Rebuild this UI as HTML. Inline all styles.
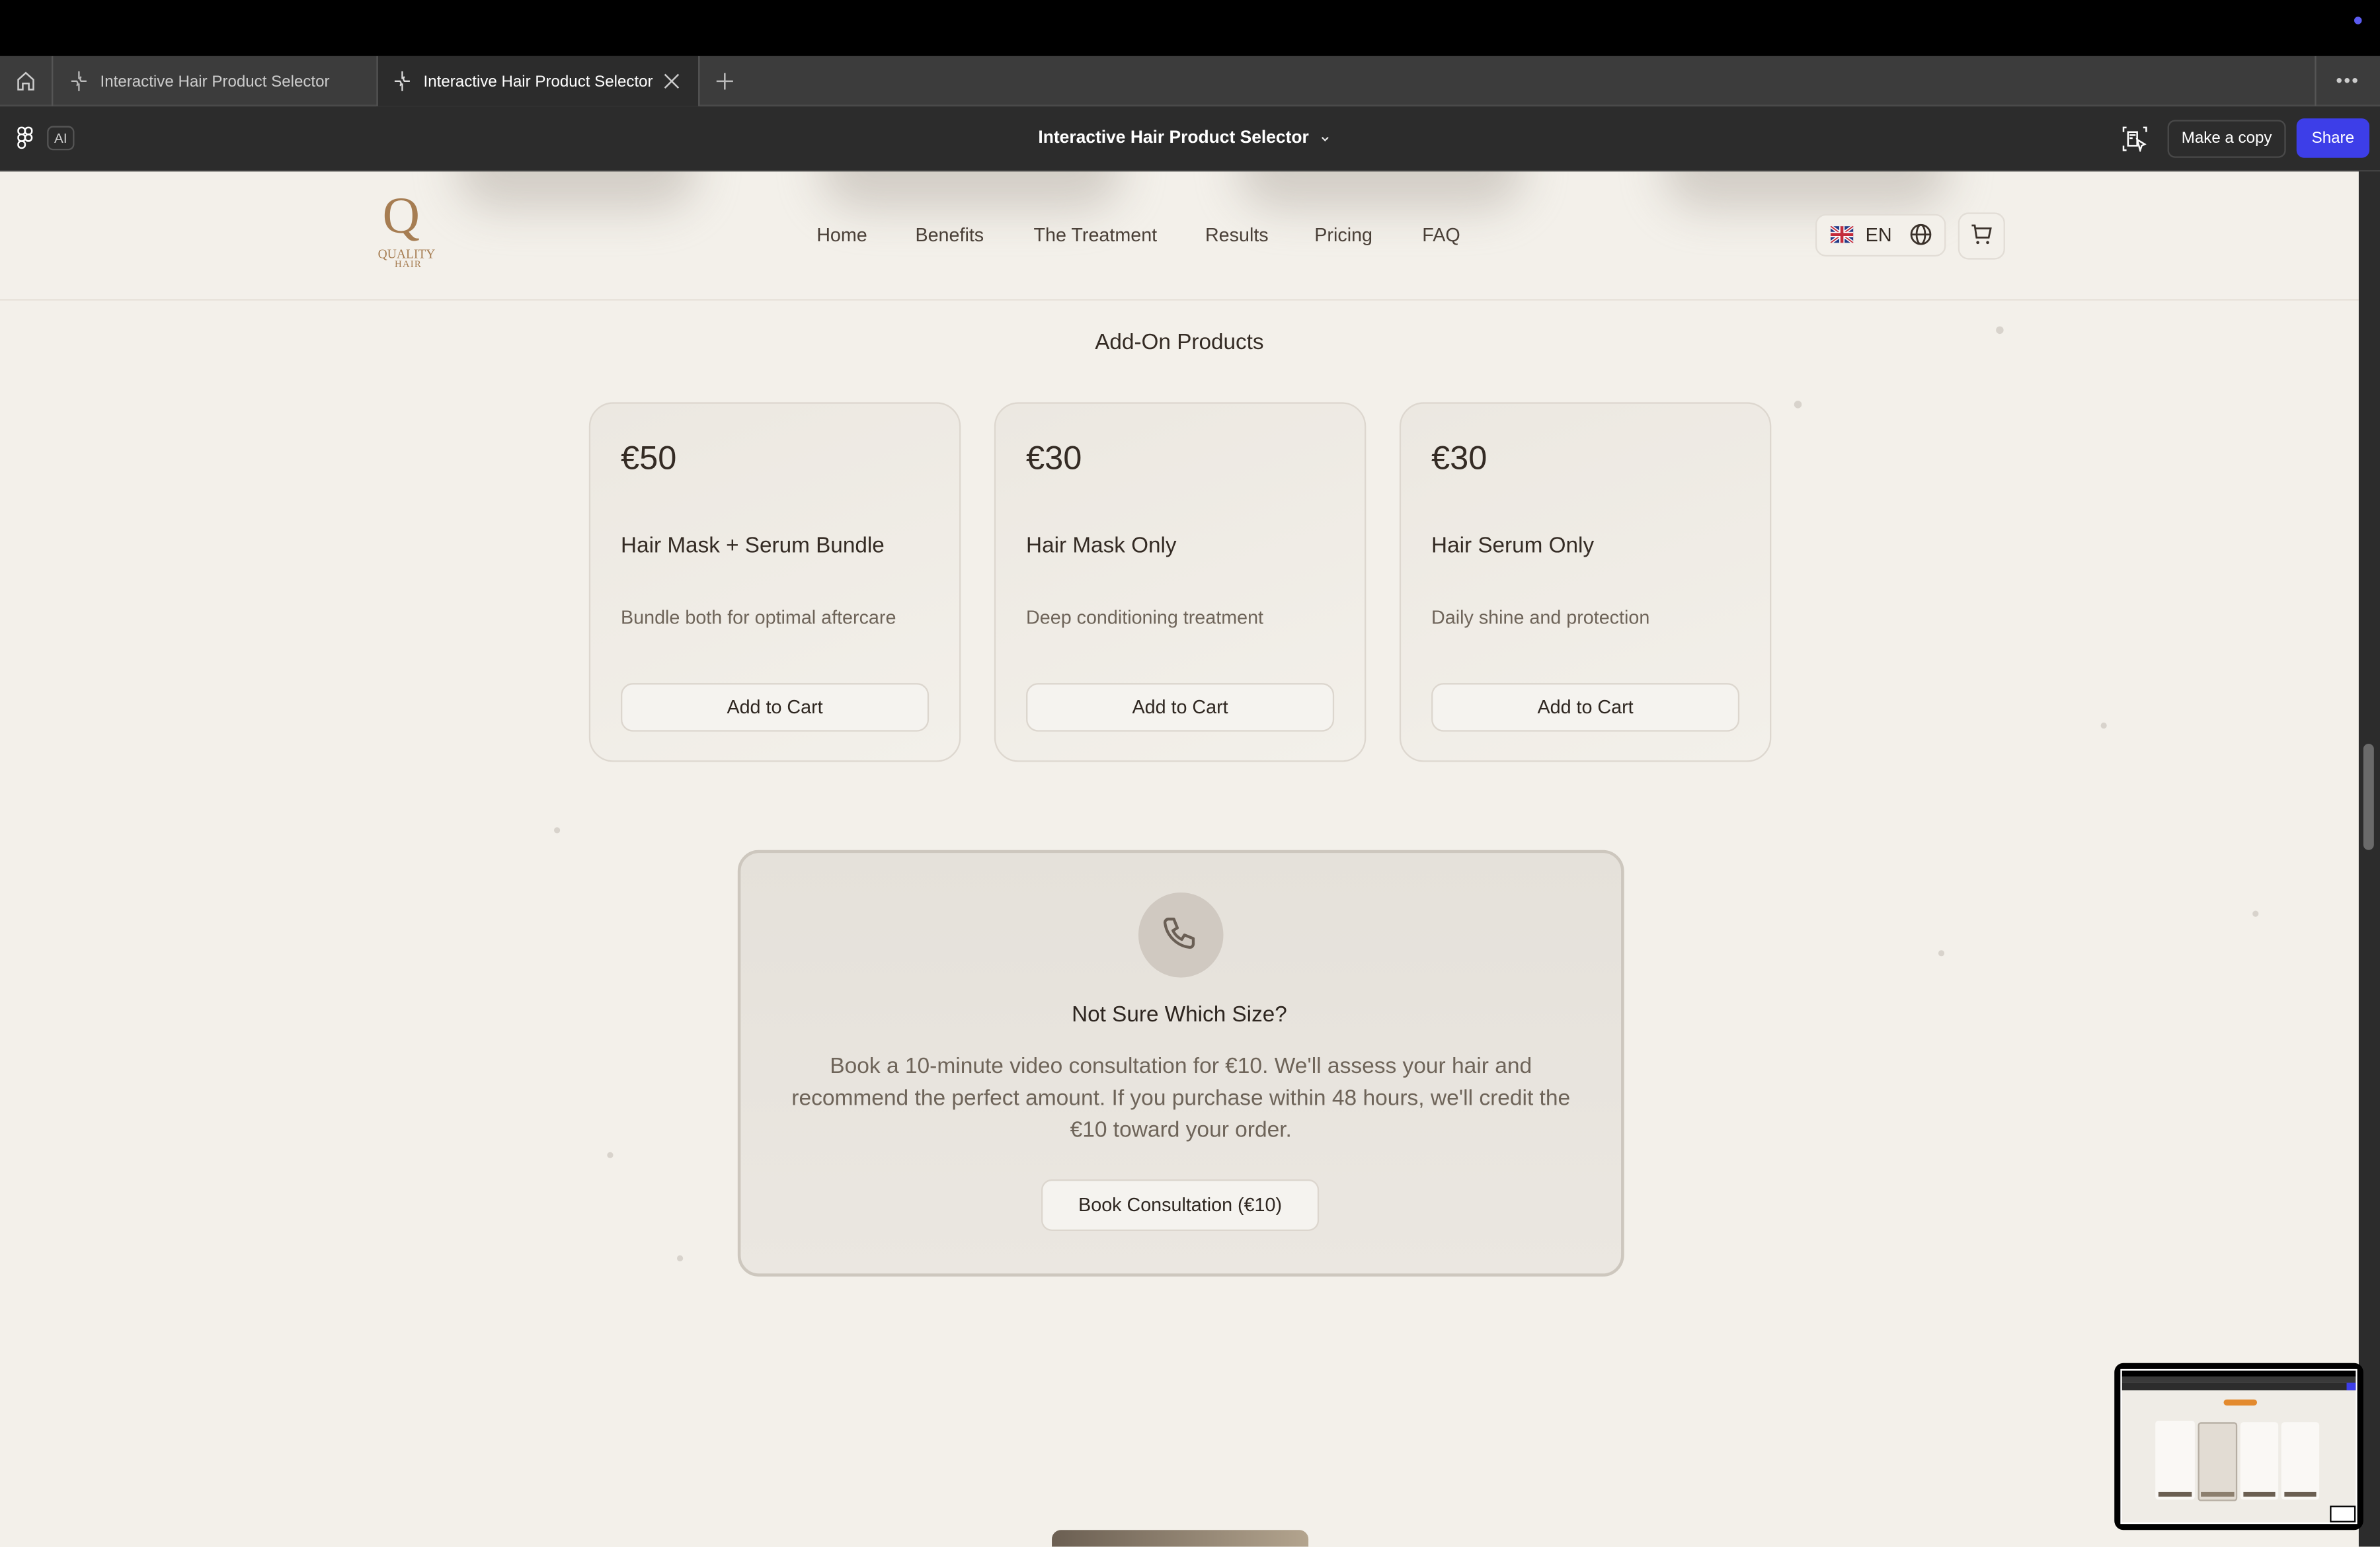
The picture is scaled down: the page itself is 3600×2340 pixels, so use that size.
<!DOCTYPE html>
<html><head><meta charset="utf-8">
<style>
*{box-sizing:border-box;margin:0;padding:0}
html,body{width:3600px;height:2338px;overflow:hidden;background:#f3f0ea}
#s{position:absolute;left:0;top:0;width:1568px;height:1019px;transform:scale(2.29592);transform-origin:0 0;font-family:"Liberation Sans",sans-serif;overflow:hidden;background:#f3f0ea}
.a{position:absolute}
.t{white-space:nowrap}
.card{position:absolute;top:265px;width:245px;height:237px;border:1.5px solid #ddd7cf;border-radius:16px;background:linear-gradient(160deg,#ece8e1,#f3f0ea)}
.card .p{position:absolute;left:20px;top:23px;font-size:22px;color:#342b24}
.card .n{position:absolute;left:20px;top:86px;font-size:14.5px;color:#342b24}
.card .d{position:absolute;left:20px;top:134px;font-size:12.5px;color:#6e6459}
.card .b{position:absolute;left:20px;top:184px;width:203px;height:32px;border:1px solid #dcd6ce;border-radius:8px;background:#f5f3ef;font-size:12.5px;color:#2e2620;text-align:center;line-height:30px}
.nav{position:absolute;top:148px;font-size:12.5px;color:#4a4038}
.blob{position:absolute;top:-30px;height:55px;border-radius:40px;background:#b9b2aa;filter:blur(14px);opacity:.55}
.dot{position:absolute;width:5px;height:5px;border-radius:50%;background:#d8d3cc}
</style></head><body>
<div id="s">
<div class="a" style="left:0;top:0;width:1568px;height:37px;background:#000"></div>
<div class="a" style="left:1551px;top:11px;width:5px;height:5px;border-radius:50%;background:#5b5bf0"></div>
<div class="a" style="left:0;top:37px;width:1568px;height:33px;background:#3c3c3c;border-bottom:1px solid #4a4a4a"></div>
<div class="a" style="left:34px;top:37px;width:1px;height:33px;background:#555"></div>
<div class="a" style="left:248px;top:37px;width:213px;height:33px;background:#2c2c2c;border-left:1px solid #555;border-right:1px solid #555"></div>
<div class="a" style="left:1525px;top:37px;width:1px;height:33px;background:#555"></div>
<svg class="a" style="left:10px;top:46px" width="14" height="15" viewBox="0 0 14 15"><path d="M2 6.5L7 2l5 4.5V13H9V9H5v4H2z" fill="none" stroke="#ccc" stroke-width="1.1"/></svg>
<svg class="a" style="left:45px;top:46px" width="14" height="15" viewBox="0 0 14 15"><path d="M7 1v5M7 9v5M2 7.5h3.5a2 2 0 0 1 0 3M12 7.5H8.5a2 2 0 0 1 0-3" fill="none" stroke="#bbb" stroke-width="1"/></svg>
<div class="a t" style="left:66px;top:48px;font-size:10.5px;color:#ccc">Interactive Hair Product Selector</div>
<svg class="a" style="left:258px;top:46px" width="14" height="15" viewBox="0 0 14 15"><path d="M7 1v5M7 9v5M2 7.5h3.5a2 2 0 0 1 0 3M12 7.5H8.5a2 2 0 0 1 0-3" fill="none" stroke="#ddd" stroke-width="1"/></svg>
<div class="a t" style="left:279px;top:48px;font-size:10.5px;color:#fff">Interactive Hair Product Selector</div>
<svg class="a" style="left:437px;top:48px" width="11" height="11" viewBox="0 0 11 11"><path d="M1 1l9 9M10 1l-9 9" stroke="#ccc" stroke-width="1.1"/></svg>
<svg class="a" style="left:472px;top:48px" width="11" height="11" viewBox="0 0 11 11"><path d="M5.5 0v11M0 5.5h11" stroke="#bbb" stroke-width="1.1"/></svg>
<div class="a t" style="left:1539px;top:46px;font-size:12px;color:#ccc;letter-spacing:1px">•••</div>
<div class="a" style="left:0;top:70px;width:1568px;height:43px;background:#2c2c2c;border-bottom:1px solid #444"></div>
<svg class="a" style="left:11px;top:83px" width="11" height="16" viewBox="0 0 11 16"><g fill="none" stroke="#fff" stroke-width="1.1"><rect x="1" y="1" width="4.5" height="4.5" rx="2"/><rect x="5.5" y="1" width="4.5" height="4.5" rx="2"/><rect x="1" y="5.5" width="4.5" height="4.5" rx="2"/><circle cx="7.75" cy="7.75" r="2.2"/><rect x="1" y="10" width="4.5" height="4.5" rx="2"/></g></svg>
<div class="a t" style="left:31px;top:83px;width:18px;height:16px;border:1px solid #555;border-radius:4px;font-size:9px;color:#ccc;text-align:center;line-height:14px">AI</div>
<div class="a t" style="left:684px;top:85px;font-size:11.5px;color:#fff;font-weight:bold">Interactive Hair Product Selector</div>
<svg class="a" style="left:870px;top:89px" width="6" height="5" viewBox="0 0 6 5"><path d="M1 1.5l2 2 2-2" fill="none" stroke="#ddd" stroke-width="1"/></svg>
<svg class="a" style="left:1398px;top:83px" width="17" height="17" viewBox="0 0 17 17"><g fill="none" stroke="#fff" stroke-width="1.1"><path d="M1 4V1h2M1 13v3h2M14 1h2v3"/><rect x="4" y="4" width="6" height="9"/><path d="M5 6h4M5 8h2M10 9l5 3-2 1-1 3z"/></g></svg>
<div class="a t" style="left:1428px;top:79px;width:78px;height:25px;border:1px solid #4a4a4a;border-radius:5px;font-size:10.5px;color:#fff;text-align:center;line-height:23px">Make a copy</div>
<div class="a t" style="left:1513px;top:78px;width:48px;height:26px;background:#3d3ee8;border-radius:5px;font-size:10.5px;color:#fff;text-align:center;line-height:26px">Share</div>
<div class="a" style="left:0;top:113px;width:1554px;height:906px;background:#f3f0ea;overflow:hidden">
  <div class="blob" style="left:300px;width:160px"></div>
  <div class="blob" style="left:540px;width:200px"></div>
  <div class="blob" style="left:815px;width:190px"></div>
  <div class="blob" style="left:1095px;width:190px"></div>
  <div class="a" style="left:0;top:84px;width:1554px;height:1px;background:#e6e1d9"></div>
</div>
<div class="a t" style="left:252px;top:126px;font-family:'Liberation Serif',serif;font-size:34px;color:#a67d52;line-height:34px">Q</div>
<div class="a t" style="left:249px;top:162px;font-family:'Liberation Serif',serif;font-size:8.5px;color:#a67d52">QUALITY</div>
<div class="a t" style="left:260px;top:171px;font-family:'Liberation Serif',serif;font-size:6.5px;color:#a67d52;letter-spacing:.5px">HAIR</div>
<div class="nav t" style="left:538px">Home</div>
<div class="nav t" style="left:603px">Benefits</div>
<div class="nav t" style="left:681px">The Treatment</div>
<div class="nav t" style="left:794px">Results</div>
<div class="nav t" style="left:866px">Pricing</div>
<div class="nav t" style="left:937px">FAQ</div>
<div class="a" style="left:1196px;top:141px;width:86px;height:28px;border:1px solid #e2ddd6;border-radius:7px;background:#f3f0ea"></div>
<svg class="a" style="left:1206px;top:149px" width="15" height="11" viewBox="0 0 15 11"><rect width="15" height="11" fill="#233a85"/><path d="M0 0l15 11M15 0L0 11" stroke="#fff" stroke-width="2.2"/><path d="M0 0l15 11M15 0L0 11" stroke="#c42b3a" stroke-width=".8"/><path d="M7.5 0v11M0 5.5h15" stroke="#fff" stroke-width="3.5"/><path d="M7.5 0v11M0 5.5h15" stroke="#c42b3a" stroke-width="2"/></svg>
<div class="a t" style="left:1229px;top:148px;font-size:12.5px;color:#342b24">EN</div>
<svg class="a" style="left:1258px;top:147px" width="15" height="15" viewBox="0 0 15 15"><g fill="none" stroke="#3a312a" stroke-width="1.2"><circle cx="7.5" cy="7.5" r="6.3"/><ellipse cx="7.5" cy="7.5" rx="2.8" ry="6.3"/><path d="M1.2 7.5h12.6"/></g></svg>
<div class="a" style="left:1290px;top:140px;width:31px;height:31px;border:1px solid #e2ddd6;border-radius:7px;background:#f3f0ea"></div>
<svg class="a" style="left:1298px;top:147px" width="15" height="15" viewBox="0 0 15 15"><g fill="none" stroke="#3a312a" stroke-width="1.2"><path d="M1 1.5h2l1.2 8h8l1.3-6H3.6"/></g><circle cx="5" cy="12.8" r="1" fill="#3a312a"/><circle cx="11.5" cy="12.8" r="1" fill="#3a312a"/></svg>
<div class="dot" style="left:874px;top:270px"></div><div class="dot" style="left:1182px;top:264px"></div><div class="dot" style="left:1315px;top:215px"></div>
<div class="dot" style="left:365px;top:545px;width:4px;height:4px"></div><div class="dot" style="left:1384px;top:476px;width:4px;height:4px"></div>
<div class="dot" style="left:806px;top:766px"></div><div class="dot" style="left:400px;top:759px;width:4px;height:4px"></div><div class="dot" style="left:1277px;top:626px;width:4px;height:4px"></div>
<div class="dot" style="left:446px;top:827px;width:4px;height:4px"></div><div class="dot" style="left:1484px;top:600px;width:4px;height:4px"></div>
<div class="a t" style="left:0;width:1554px;top:218px;text-align:center;font-size:14.5px;color:#342b24">Add-On Products</div>
<div class="card" style="left:388px"><div class="p t">€50</div><div class="n t">Hair Mask + Serum Bundle</div><div class="d t">Bundle both for optimal aftercare</div><div class="b t">Add to Cart</div></div>
<div class="card" style="left:655px"><div class="p t">€30</div><div class="n t">Hair Mask Only</div><div class="d t">Deep conditioning treatment</div><div class="b t">Add to Cart</div></div>
<div class="card" style="left:922px"><div class="p t">€30</div><div class="n t">Hair Serum Only</div><div class="d t">Daily shine and protection</div><div class="b t">Add to Cart</div></div>
<div class="a" style="left:486px;top:560px;width:584px;height:281px;border:2px solid #cdc7be;border-radius:14px;background:linear-gradient(180deg,#e5e1da,#ebe7e1)"></div>
<div class="a" style="left:750px;top:588px;width:56px;height:56px;border-radius:50%;background:#d0c9c1"></div>
<svg class="a" style="left:764px;top:602px" width="28" height="28" viewBox="0 0 24 24"><path d="M5 3h3l2 5-2.5 1.5a11 11 0 0 0 5 5L14 12l5 2v3a2 2 0 0 1-2 2A16 16 0 0 1 3 5a2 2 0 0 1 2-2" fill="none" stroke="#6a5f55" stroke-width="1.6" stroke-linejoin="round"/></svg>
<div class="a t" style="left:0;width:1554px;top:661px;text-align:center;font-size:14.5px;color:#2e2620">Not Sure Which Size?</div>
<div class="a t" style="left:478px;width:600px;top:693px;text-align:center;font-size:14.6px;line-height:21px;color:#6e6459">Book a 10-minute video consultation for €10. We'll assess your hair and<br>recommend the perfect amount. If you purchase within 48 hours, we'll credit the<br>€10 toward your order.</div>
<div class="a t" style="left:686px;top:777px;width:183px;height:34px;border:1px solid #dcd6ce;border-radius:7px;background:#f5f3ef;text-align:center;line-height:32px;font-size:12.5px;color:#2e2620">Book Consultation (€10)</div>
<div class="a" style="left:693px;top:1008px;width:169px;height:20px;border-radius:6px;background:linear-gradient(90deg,#6b5f52,#b3a48e)"></div>
<div class="a" style="left:1554px;top:113px;width:14px;height:906px;background:#2c2c2c"></div>
<div class="a" style="left:1557px;top:490px;width:7px;height:70px;border-radius:4px;background:#6a6a6a"></div>
<div class="a" style="left:1393px;top:898px;width:164px;height:110px;background:#000;border-radius:6px"></div>
<div class="a" style="left:1397px;top:902px;width:156px;height:102px;background:#efece6;border:1px solid #fff;overflow:hidden">
  <div class="a" style="left:0;top:0;width:156px;height:4px;background:#000"></div>
  <div class="a" style="left:0;top:4px;width:156px;height:4px;background:#3a3a3a"></div>
  <div class="a" style="left:0;top:8px;width:156px;height:5px;background:#2c2c2c"></div>
  <div class="a" style="left:148px;top:8px;width:8px;height:5px;background:#3d3ee8"></div>
  <div class="a" style="left:67px;top:19px;width:22px;height:4px;background:#e38a2e;border-radius:2px"></div>
  <div class="a" style="left:22px;top:33px;width:26px;height:52px;background:#faf8f5;border-radius:2px"></div>
  <div class="a" style="left:50px;top:34px;width:26px;height:52px;background:#e2dcd3;border:1px solid #b6aea3;border-radius:2px"></div>
  <div class="a" style="left:78px;top:34px;width:25px;height:51px;background:#faf8f5;border-radius:2px"></div>
  <div class="a" style="left:105px;top:34px;width:25px;height:51px;background:#faf8f5;border-radius:2px"></div>
  <div class="a" style="left:24px;top:80px;width:22px;height:3px;background:#6b5f52"></div>
  <div class="a" style="left:52px;top:80px;width:22px;height:3px;background:#8c7f6e"></div>
  <div class="a" style="left:80px;top:80px;width:21px;height:3px;background:#6b5f52"></div>
  <div class="a" style="left:107px;top:80px;width:21px;height:3px;background:#6b5f52"></div>
  <div class="a" style="left:137px;top:89px;width:17px;height:11px;border:1px solid #000;background:#fff"></div>
</div>
</div>
</body></html>
